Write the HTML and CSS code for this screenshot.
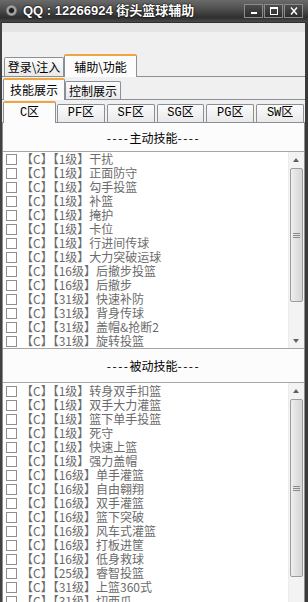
FILE: index.html
```html
<!DOCTYPE html>
<html>
<head>
<meta charset="utf-8">
<link rel="stylesheet" href="styles.css">
</head>
<body>
<div class="win">
  <div class="titlebar">
    <span class="appicon"></span>
    <span class="title">QQ : 12266924 街头篮球辅助</span>
    <div class="tbtns">
      <span class="tbtn"><svg width="10" height="8" viewBox="0 0 10 8"><rect x="2" y="5" width="6" height="2" fill="#fff"/></svg></span>
      <span class="tbtn"><svg width="10" height="8" viewBox="0 0 10 8"><rect x="1.5" y="0.5" width="7" height="7" fill="none" stroke="#fff"/><rect x="1" y="0" width="8" height="2" fill="#fff"/></svg></span>
      <span class="tbtn"><svg width="10" height="8" viewBox="0 0 10 8"><path d="M2 0.5 L8 7.5 M8 0.5 L2 7.5" stroke="#fff" stroke-width="1.4"/></svg></span>
    </div>
  </div>
  <div class="client">
    <div class="strip"></div>
    <div class="tabs main">
      <div class="tab t-login">登录\注入</div>
      <div class="tab sel t-aux">辅助\功能</div>
    </div>
    <div class="page">
      <div class="tabs sub">
        <div class="tab sel t-skill">技能展示</div>
        <div class="tab t-ctrl">控制展示</div>
      </div>
      <div class="page">
        <div class="tabs zone">
          <div class="tab sel t-c">C区</div>
          <div class="tab z">PF区</div>
          <div class="tab z">SF区</div>
          <div class="tab z">SG区</div>
          <div class="tab z">PG区</div>
          <div class="tab z">SW区</div>
        </div>
        <div class="panel">
          <div class="sechead h1"><span class="dash">----</span>主动技能<span class="dash">----</span></div>
          <div class="listbox lb1">
            <div class="items">
              <div class="row"><span class="cb"></span>【C】【1级】干扰</div>
              <div class="row"><span class="cb"></span>【C】【1级】正面防守</div>
              <div class="row"><span class="cb"></span>【C】【1级】勾手投篮</div>
              <div class="row"><span class="cb"></span>【C】【1级】补篮</div>
              <div class="row"><span class="cb"></span>【C】【1级】掩护</div>
              <div class="row"><span class="cb"></span>【C】【1级】卡位</div>
              <div class="row"><span class="cb"></span>【C】【1级】行进间传球</div>
              <div class="row"><span class="cb"></span>【C】【1级】大力突破运球</div>
              <div class="row"><span class="cb"></span>【C】【16级】后撤步投篮</div>
              <div class="row"><span class="cb"></span>【C】【16级】后撤步</div>
              <div class="row"><span class="cb"></span>【C】【31级】快速补防</div>
              <div class="row"><span class="cb"></span>【C】【31级】背身传球</div>
              <div class="row"><span class="cb"></span>【C】【31级】盖帽&amp;抢断2</div>
              <div class="row"><span class="cb"></span>【C】【31级】旋转投篮</div>
            </div>
            <div class="sbar">
              <div class="arrow up"></div>
              <div class="thumb th1"><span class="grip"></span></div>
              <div class="track"></div>
              <div class="arrow down"></div>
            </div>
          </div>
          <div class="sechead h2"><span class="dash">----</span>被动技能<span class="dash">----</span></div>
          <div class="listbox lb2">
            <div class="items">
              <div class="row"><span class="cb"></span>【C】【1级】转身双手扣篮</div>
              <div class="row"><span class="cb"></span>【C】【1级】双手大力灌篮</div>
              <div class="row"><span class="cb"></span>【C】【1级】篮下单手投篮</div>
              <div class="row"><span class="cb"></span>【C】【1级】死守</div>
              <div class="row"><span class="cb"></span>【C】【1级】快速上篮</div>
              <div class="row"><span class="cb"></span>【C】【1级】强力盖帽</div>
              <div class="row"><span class="cb"></span>【C】【16级】单手灌篮</div>
              <div class="row"><span class="cb"></span>【C】【16级】自由翱翔</div>
              <div class="row"><span class="cb"></span>【C】【16级】双手灌篮</div>
              <div class="row"><span class="cb"></span>【C】【16级】篮下突破</div>
              <div class="row"><span class="cb"></span>【C】【16级】风车式灌篮</div>
              <div class="row"><span class="cb"></span>【C】【16级】打板进筐</div>
              <div class="row"><span class="cb"></span>【C】【16级】低身救球</div>
              <div class="row"><span class="cb"></span>【C】【25级】睿智投篮</div>
              <div class="row"><span class="cb"></span>【C】【31级】上篮360式</div>
              <div class="row"><span class="cb"></span>【C】【31级】切西瓜</div>
            </div>
            <div class="sbar">
              <div class="arrow up"></div>
              <div class="thumb th2"><span class="grip"></span></div>
              <div class="track"></div>
            </div>
          </div>
        </div>
      </div>
    </div>
  </div>
</div>
</body>
</html>
```
FILE: styles.css
```css
* { box-sizing: border-box; margin: 0; padding: 0; }
html, body { width: 308px; height: 602px; overflow: hidden; }
body {
  font-family: "Noto Sans CJK SC", sans-serif;
  font-size: 12px;
  background: #f0f0f0;
  color: #000;
}
.win { width: 308px; height: 602px; display: flex; flex-direction: column; overflow: hidden; }

/* title bar */
.titlebar {
  height: 22px;
  flex: none;
  display: flex;
  align-items: flex-start;
  padding-left: 6px;
  background: linear-gradient(#6a6a6a 0%, #4c4c4c 45%, #2f2f2f 80%, #4a4a4a 100%);
}
.appicon {
  width: 11px; height: 11px; border-radius: 50%;
  margin-top: 5px; margin-right: 6px; flex: none;
  background: radial-gradient(circle, #1e1e1e 0 2px, #8a8a8a 3px, #b0b0b0 4px, #6a6a6a 5.5px);
}
.title {
  flex: 1;
  color: #fff;
  font: bold 13px "Liberation Sans", "Noto Sans CJK SC", sans-serif;
  line-height: 22px;
  white-space: nowrap;
  text-shadow: 0 0 2px #000, 0 0 1px #000;
}
.tbtns { display: flex; gap: 1px; margin-top: 4px; margin-right: 5px; }
.tbtn {
  width: 19px; height: 14px;
  border: 1px solid #8c8c8c;
  background: linear-gradient(#4d4d4d, #2c2c2c);
  display: flex; align-items: center; justify-content: center;
}

/* client */
.client {
  flex: 1;
  display: flex; flex-direction: column;
  border-left: 2px solid #414141;
  border-right: 3px solid #3a3a3a;
  min-height: 0;
}
.strip { height: 10px; flex: none; border-top: 1px solid #2d2d2d; background: #e4e4e4; }

/* tabs */
.tabs {
  display: flex;
  align-items: flex-end;
  border-bottom: 1px solid #8b8f98;
  flex: none;
}
.tab {
  height: 19px;
  border: 1px solid #8b8f98;
  border-bottom: none;
  border-radius: 2px 2px 0 0;
  background: linear-gradient(#fbfbfb, #e9e9e9);
  line-height: 17px;
  text-align: center;
  white-space: nowrap;
  font-size: 12px;
}
.tab.sel {
  height: 23px;
  margin-bottom: -1px;
  background: #fcfcfc;
  border-top: 2px solid #f0a640;
  position: relative;
}
.main { margin-top: 22px; padding-left: 2px; height: 23px; }
.t-login { width: 60px; }
.t-aux { width: 73px; line-height: 21px; }
.page { display: flex; flex-direction: column; flex: 1; min-height: 0; }
.sub { padding-top: 1px; padding-left: 1px; height: 23px; }
.sub .tab { height: 18px; }
.sub .tab.sel { height: 22px; line-height: 20px; }
.t-skill { width: 62px; }
.t-ctrl { width: 56px; }
.zone { padding-top: 1px; padding-left: 1px; padding-right: 1px; height: 23px; gap: 2px; }
.zone .tab {
  height: 18px;
  font-family: "Liberation Mono", "Noto Sans CJK SC", monospace;
  line-height: 17px;
}
.zone .tab.sel { height: 22px; line-height: 20px; }
.t-c { width: 53px; margin-right: -1px; }
.z { flex: 1; }

/* panel */
.panel {
  flex: 1; min-height: 0;
  display: flex; flex-direction: column;
  background: #fcfcfc;
  border-left: 1px solid #8b8f98;
  border-right: 1px solid #8b8f98;
}
.sechead {
  flex: none;
  display: flex; align-items: center; justify-content: center;
  font-size: 12px; color: #000;
}
.dash { letter-spacing: 1.5px; }
.h1 { height: 28px; }
.h2 { height: 33px; }
.listbox {
  display: flex;
  background: #fff;
  border-top: 1px solid #a5a5a5;
  border-bottom: 1px solid #a5a5a5;
  flex: none;
  overflow: hidden;
}
.lb1 { height: 198px; }
.lb2 { flex: 1; min-height: 0; border-bottom: none; }
.items { flex: 1; padding-left: 3px; overflow: hidden; }
.lb2 .items { padding-top: 1px; }
.row {
  height: 14px; line-height: 14px;
  display: flex; align-items: center;
  white-space: nowrap;
  color: #6b6b6b;
}
.cb {
  width: 11px; height: 11px; flex: none;
  border: 1px solid #8e8e8e;
  background: #fff;
  margin-right: 4px;
}

/* scrollbar */
.sbar {
  width: 16px; flex: none;
  display: flex; flex-direction: column;
  background: #f3f3f3;
  border-left: 1px solid #ececec;
}
.arrow { height: 16px; flex: none; position: relative; }
.arrow::after {
  content: "";
  position: absolute; left: 4px; top: 6px;
  border-left: 3.5px solid transparent;
  border-right: 3.5px solid transparent;
}
.arrow.up::after { border-bottom: 4px solid #606060; }
.arrow.down::after { border-top: 4px solid #606060; top: 7px; }
.thumb {
  flex: none;
  margin: 0 1px 0 1px;
  border: 1px solid #9c9c9c;
  border-radius: 2px;
  background: linear-gradient(90deg, #efefef, #dedede 60%, #d6d6d6);
  display: flex; align-items: center; justify-content: center;
}
.th1 { height: 134px; }
.th2 { height: 178px; }
.grip {
  width: 7px; height: 5px;
  background: linear-gradient(#8a8a8a 0 1px, transparent 1px 2px, #8a8a8a 2px 3px, transparent 3px 4px, #8a8a8a 4px 5px);
}
.track { flex: 1; }
```
